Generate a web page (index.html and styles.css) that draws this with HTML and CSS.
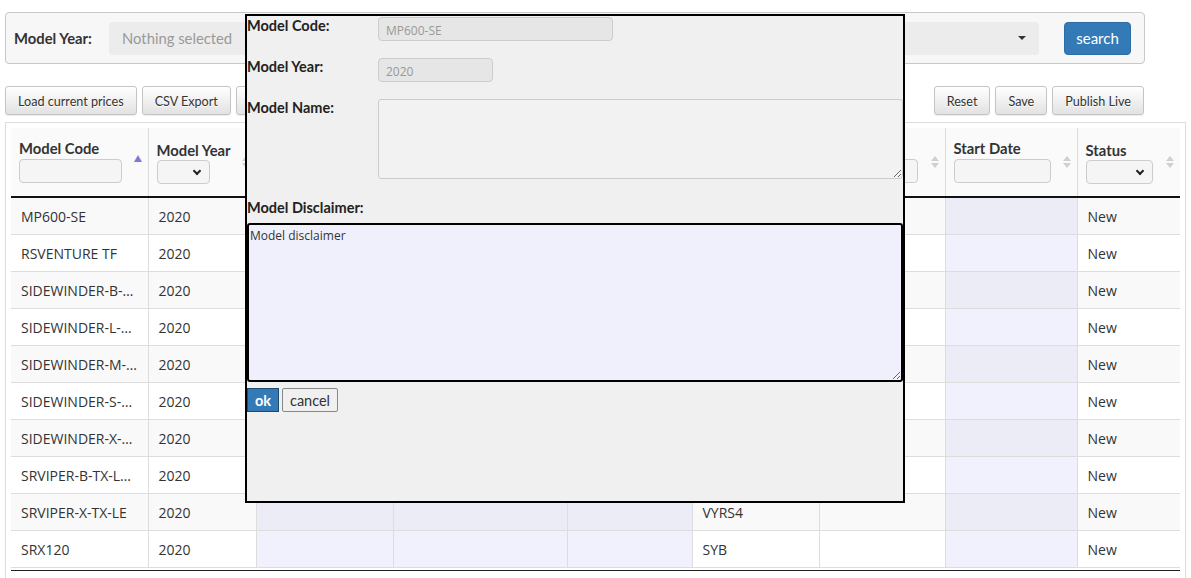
FILE: index.html
```html
<!DOCTYPE html>
<html>
<head>
<meta charset="utf-8">
<link rel="stylesheet" href="styles.css">
</head>
<body>
<div class="filter-panel">
  <label class="filter-label">Model Year:</label>
  <div class="picker"><span class="picker-text">Nothing selected</span><span class="caret"></span></div>
  <button class="btn-search">search</button>
</div>

<div class="toolbar">
  <div class="group">
    <button class="btn">Load current prices</button>
    <button class="btn">CSV Export</button>
    <button class="btn">CSV Import</button>
  </div>
  <div class="group">
    <button class="btn">Reset</button>
    <button class="btn">Save</button>
    <button class="btn">Publish Live</button>
  </div>
</div>

<div class="table-wrap">
  <table class="grid">
    <colgroup>
      <col class="c1"><col class="c2"><col class="c3"><col class="c4"><col class="c5"><col class="c6"><col class="c7"><col class="c8"><col class="c9">
    </colgroup>
    <thead>
      <tr>
        <th><div class="th-title">Model Code</div><input class="th-input w103"><span class="sort-asc"></span></th>
        <th><div class="th-title">Model Year</div><div class="th-select w53"><span class="chev"></span></div><span class="sort"></span></th>
        <th><div class="th-title">Model Name</div><input class="th-input w100"><span class="sort"></span></th>
        <th><div class="th-title">Price</div><input class="th-input w130"><span class="sort"></span></th>
        <th><div class="th-title">MSRP</div><input class="th-input w90"><span class="sort"></span></th>
        <th><div class="th-title">Code</div><input class="th-input w90"><span class="sort"></span></th>
        <th><div class="th-title">End Date</div><input class="th-input w90"><span class="sort"></span></th>
        <th><div class="th-title">Start Date</div><input class="th-input w97"><span class="sort"></span></th>
        <th><div class="th-title">Status</div><div class="th-select w67"><span class="chev"></span></div><span class="sort"></span></th>
      </tr>
    </thead>
    <tbody>
      <tr><td>MP600-SE</td><td>2020</td><td class="lav"></td><td class="lav"></td><td class="lav"></td><td></td><td></td><td class="lav"></td><td>New</td></tr>
      <tr><td>RSVENTURE TF</td><td>2020</td><td class="lav"></td><td class="lav"></td><td class="lav"></td><td></td><td></td><td class="lav"></td><td>New</td></tr>
      <tr><td>SIDEWINDER-B-TX-LE</td><td>2020</td><td class="lav"></td><td class="lav"></td><td class="lav"></td><td></td><td></td><td class="lav"></td><td>New</td></tr>
      <tr><td>SIDEWINDER-L-TX-LE</td><td>2020</td><td class="lav"></td><td class="lav"></td><td class="lav"></td><td></td><td></td><td class="lav"></td><td>New</td></tr>
      <tr><td>SIDEWINDER-M-TX-LE</td><td>2020</td><td class="lav"></td><td class="lav"></td><td class="lav"></td><td></td><td></td><td class="lav"></td><td>New</td></tr>
      <tr><td>SIDEWINDER-S-TX-LE</td><td>2020</td><td class="lav"></td><td class="lav"></td><td class="lav"></td><td></td><td></td><td class="lav"></td><td>New</td></tr>
      <tr><td>SIDEWINDER-X-TX-LE</td><td>2020</td><td class="lav"></td><td class="lav"></td><td class="lav"></td><td></td><td></td><td class="lav"></td><td>New</td></tr>
      <tr><td>SRVIPER-B-TX-LE-SE</td><td>2020</td><td class="lav"></td><td class="lav"></td><td class="lav"></td><td></td><td></td><td class="lav"></td><td>New</td></tr>
      <tr><td>SRVIPER-X-TX-LE</td><td>2020</td><td class="lav"></td><td class="lav"></td><td class="lav"></td><td>VYRS4</td><td></td><td class="lav"></td><td>New</td></tr>
      <tr><td>SRX120</td><td>2020</td><td class="lav"></td><td class="lav"></td><td class="lav"></td><td>SYB</td><td></td><td class="lav"></td><td>New</td></tr>
    </tbody>
  </table>
  <div class="grid-foot"></div>
</div>

<div class="modal">
  <div class="m-row r1">
    <label class="m-label">Model Code:</label>
    <input class="m-input w235" value="MP600-SE" disabled>
  </div>
  <div class="m-row r2">
    <label class="m-label">Model Year:</label>
    <input class="m-input w115" value="2020" disabled>
  </div>
  <div class="m-row r3">
    <label class="m-label">Model Name:</label>
    <textarea class="m-name"></textarea>
  </div>
  <label class="m-label disc-label">Model Disclaimer:</label>
  <textarea class="m-disc">Model disclaimer</textarea>
  <div class="m-actions">
    <button class="btn-ok">ok</button>
    <button class="btn-cancel">cancel</button>
  </div>
</div>
</body>
</html>
```

FILE: styles.css
```css
* { box-sizing: border-box; }
html, body { margin: 0; padding: 0; background: #fff; }
body {
  padding: 12px 0 0 5px;
  font-family: "Lato", "Open Sans", sans-serif;
  color: #333;
  position: relative;
  height: 578px;
  overflow: hidden;
}

/* filter panel */
.filter-panel {
  width: 1140px;
  height: 52px;
  border: 1px solid #c8c8c8;
  border-radius: 4px;
  background: #f7f7f7;
  display: flex;
  align-items: center;
  padding: 0 13px 0 8px;
}
.filter-label {
  font-weight: 700;
  font-size: 14.8px;
  color: #333;
  width: 95px;
}
.picker {
  width: 930px;
  height: 33px;
  background: #ececec;
  border-radius: 4px;
  display: flex;
  align-items: center;
  justify-content: space-between;
  padding: 0 13px 0 13px;
}
.picker-text { color: #999; font-size: 14.8px; }
.caret {
  width: 0; height: 0;
  border-left: 4px solid transparent;
  border-right: 4px solid transparent;
  border-top: 4px solid #333;
}
.btn-search {
  margin-left: auto;
  width: 67px;
  height: 33px;
  background: #337ab7;
  color: #fff;
  border: 1px solid #2e6da4;
  border-radius: 4px;
  font-family: "Lato", sans-serif;
  font-size: 15px;
  padding: 0;
}

/* toolbar */
.toolbar {
  width: 1139px;
  margin-top: 22px;
  display: flex;
  justify-content: space-between;
}
.group { display: flex; gap: 5px; }
.btn {
  height: 29px;
  padding: 1px 12px 0;
  font-family: "Lato", sans-serif;
  font-size: 12.6px;
  color: #333;
  border: 1px solid #c4c4c4;
  border-radius: 3px;
  background: linear-gradient(to bottom, #fff 0%, #e2e2e2 100%);
  box-shadow: 0 1px 1px rgba(0,0,0,.075);
  text-shadow: 0 1px 0 #fff;
}

/* table */
.table-wrap {
  margin-top: 7px;
  width: 1181px;
  height: 460px;
  border: 1px solid #ddd;
  padding: 5px 0 0 5px;
}
.grid {
  table-layout: fixed;
  border-collapse: collapse;
  width: 1169px;
  font-family: "Open Sans", sans-serif;
  font-size: 14px;
}
.grid-foot {
  width: 1169px;
  height: 3px;
  border-bottom: 1px solid #222;
}
.c1 { width: 137px; } .c2 { width: 108px; } .c3 { width: 137px; }
.c4 { width: 174px; } .c5 { width: 125px; } .c6 { width: 127px; }
.c7 { width: 126px; } .c8 { width: 132px; } .c9 { width: 103px; }

.grid th {
  position: relative;
  height: 69px;
  text-align: left;
  vertical-align: bottom;
  padding: 0 8px 13px 8px;
  border-left: 1px solid #ddd;
  border-bottom: 2px solid #111;
  background: #fafafa;
  font-family: "Lato", sans-serif;
}
.grid th:first-child { border-left: none; }
.th-title {
  font-weight: 700;
  font-size: 14.8px;
  line-height: 20px;
  color: #333;
  white-space: nowrap;
}
.th-input {
  display: block;
  height: 24px;
  margin-top: 1px;
  border: 1px solid #ccc;
  border-radius: 4px;
  background: #f5f5f5;
}
.th-select {
  height: 24px;
  margin-top: 0;
  margin-bottom: -1px;
  border: 1px solid #ccc;
  border-radius: 4px;
  background: #f5f5f5;
  display: flex;
  align-items: center;
  justify-content: flex-end;
  padding-right: 9px;
}
.chev {
  width: 6px; height: 6px;
  border-right: 2px solid #222;
  border-bottom: 2px solid #222;
  transform: rotate(45deg);
  margin-top: -3px;
}
.w103 { width: 103px; } .w53 { width: 53px; } .w100 { width: 100px; }
.w130 { width: 130px; } .w90 { width: 90px; } .w97 { width: 97px; }
.w67 { width: 67px; }

.sort, .sort-asc {
  position: absolute;
  right: 6px;
  top: 28px;
  width: 8px;
  height: 12px;
}
.sort::before, .sort::after, .sort-asc::before {
  content: "";
  position: absolute;
  left: 0;
  border-left: 4px solid transparent;
  border-right: 4px solid transparent;
}
.sort::before { top: 0; border-bottom: 5px solid #d0d0d0; }
.sort::after { top: 7px; border-top: 5px solid #d0d0d0; }
.sort-asc { top: 27px; right: 6px; }
.sort-asc::before { top: 0; border-bottom: 7px solid #7b7bd9; }

.grid td {
  height: 37px;
  padding: 1px 10px 0;
  border-left: 1px solid #ddd;
  border-bottom: 1px solid #ddd;
  color: #333;
  white-space: nowrap;
  overflow: hidden;
  text-overflow: ellipsis;
}
.grid td:first-child { border-left: none; }
.grid tbody tr:nth-child(odd) td { background: #f9f9f9; }
.grid tbody tr:nth-child(even) td { background: #fff; }
.grid tbody tr:nth-child(odd) td.lav { background: #ececf6; }
.grid tbody tr:nth-child(even) td.lav { background: #f1f1fd; }

/* modal */
.modal {
  position: absolute;
  left: 245px;
  top: 14px;
  width: 660px;
  height: 489px;
  border: 2px solid #000;
  background: #f0f0f0;
  font-family: "Lato", sans-serif;
}
.m-row { display: flex; align-items: flex-start; }
.r2 { margin-top: 16px; }
.r3 { margin-top: 16px; }
.m-label {
  display: block;
  width: 131px;
  flex: none;
  font-weight: 700;
  font-size: 14.5px;
  line-height: 20px;
  color: #222;
}
.m-input {
  margin-top: 1px;
  height: 24px;
  border: 1px solid #ccc;
  border-radius: 4px;
  background: #e6e6e6;
  font-family: "Open Sans", sans-serif;
  font-size: 12px;
  color: #999;
  padding: 2px 7px 0;
}
.w235 { width: 235px; }
.w115 { width: 115px; }
.m-name {
  margin-top: 1px;
  width: 525px;
  height: 80px;
  border: 1px solid #ccc;
  border-radius: 3px;
  background: #f2f2f2;
  resize: both;
}
.disc-label { width: auto; margin-top: 19px; }
.m-disc {
  display: block;
  margin-top: 5px;
  width: 656px;
  height: 159px;
  border: 2px solid #000;
  border-radius: 3px;
  background: #f0f0fd;
  font-family: "Open Sans", sans-serif;
  font-size: 12px;
  line-height: 16px;
  color: #333;
  padding: 3px 1px;
  outline: none;
}
.m-actions { margin-top: 6px; display: flex; gap: 3px; }
.btn-ok {
  width: 32px;
  height: 24px;
  padding: 0;
  background: #337ab7;
  border: 1px solid #1d4a70;
  color: #fff;
  font-family: "Lato", sans-serif;
  font-weight: 700;
  font-size: 14.5px;
}
.btn-cancel {
  width: 56px;
  height: 24px;
  padding: 0;
  background: #f0f0f0;
  border: 1px solid #888;
  border-radius: 2px;
  color: #333;
  font-family: "Lato", sans-serif;
  font-size: 14.5px;
}
```
